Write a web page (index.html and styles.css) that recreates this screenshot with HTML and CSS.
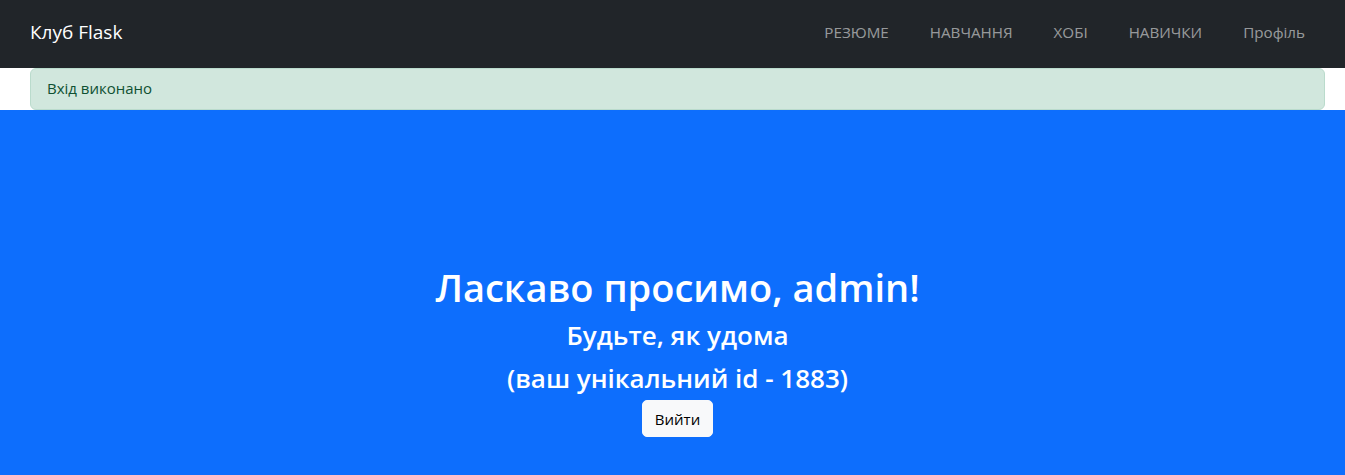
FILE: index.html
```html
<!DOCTYPE html>
<html lang="uk">
<head>
<meta charset="utf-8">
<title>Клуб Flask</title>
<link rel="stylesheet" href="styles.css">
</head>
<body>
<nav class="navbar">
  <a class="brand" href="#">Клуб Flask</a>
  <ul class="nav">
    <li><a href="#">РЕЗЮМЕ</a></li>
    <li><a href="#">НАВЧАННЯ</a></li>
    <li><a href="#">ХОБІ</a></li>
    <li><a href="#">НАВИЧКИ</a></li>
    <li><a href="#">Профіль</a></li>
  </ul>
</nav>
<div class="alert-wrap">
  <div class="alert">Вхід виконано</div>
</div>
<main class="hero">
  <h1 class="title">Ласкаво просимо, admin!</h1>
  <h2 class="sub">Будьте, як удома</h2>
  <h2 class="sub">(ваш унікальний id - 1883)</h2>
  <button class="btn" type="button">Вийти</button>
</main>
</body>
</html>
```
FILE: styles.css
```css
* { box-sizing: border-box; }
html, body { margin: 0; padding: 0; }
body {
  font-family: "Open Sans", "Noto Sans", sans-serif;
  font-size: 16px;
  line-height: 1.5;
  color: #212529;
  background: #fff;
  height: 475px;
  overflow: hidden;
}
.navbar {
  height: 68px;
  background: #212529;
  display: flex;
  align-items: center;
  justify-content: space-between;
  padding: 0 40px 4px 30px;
}
.brand {
  color: #fff;
  text-decoration: none;
  font-size: 19px;
}
.nav {
  list-style: none;
  margin: 0;
  padding: 0;
  display: flex;
  gap: 41px;
}
.nav a {
  color: rgba(255,255,255,0.55);
  text-decoration: none;
  font-size: 15.2px;
}
.alert-wrap {
  padding: 0 20px 0 30px;
}
.alert {
  height: 42px;
  background: #d1e7dd;
  border: 1px solid #badbcc;
  border-radius: 6px;
  color: #0f5132;
  padding: 0 16px 2px;
  display: flex;
  align-items: center;
  font-size: 15px;
}
.hero {
  background: #0d6efd;
  color: #fff;
  height: 365px;
  display: flex;
  flex-direction: column;
  align-items: center;
  padding: 154px 0 0 10px;
}
.title {
  margin: 0 0 4px;
  font-size: 38px;
  font-weight: 600;
  line-height: 46px;
}
.sub {
  margin: 0;
  font-size: 26px;
  font-weight: 600;
  line-height: 42px;
}
.sub + .sub {
  margin-top: 1px;
}
.btn {
  margin-top: 1px;
  height: 37px;
  padding: 0 12px;
  background: #f8f9fa;
  border: 1px solid #f8f9fa;
  border-radius: 5px;
  color: #000;
  font-family: inherit;
  font-size: 15px;
}
```
